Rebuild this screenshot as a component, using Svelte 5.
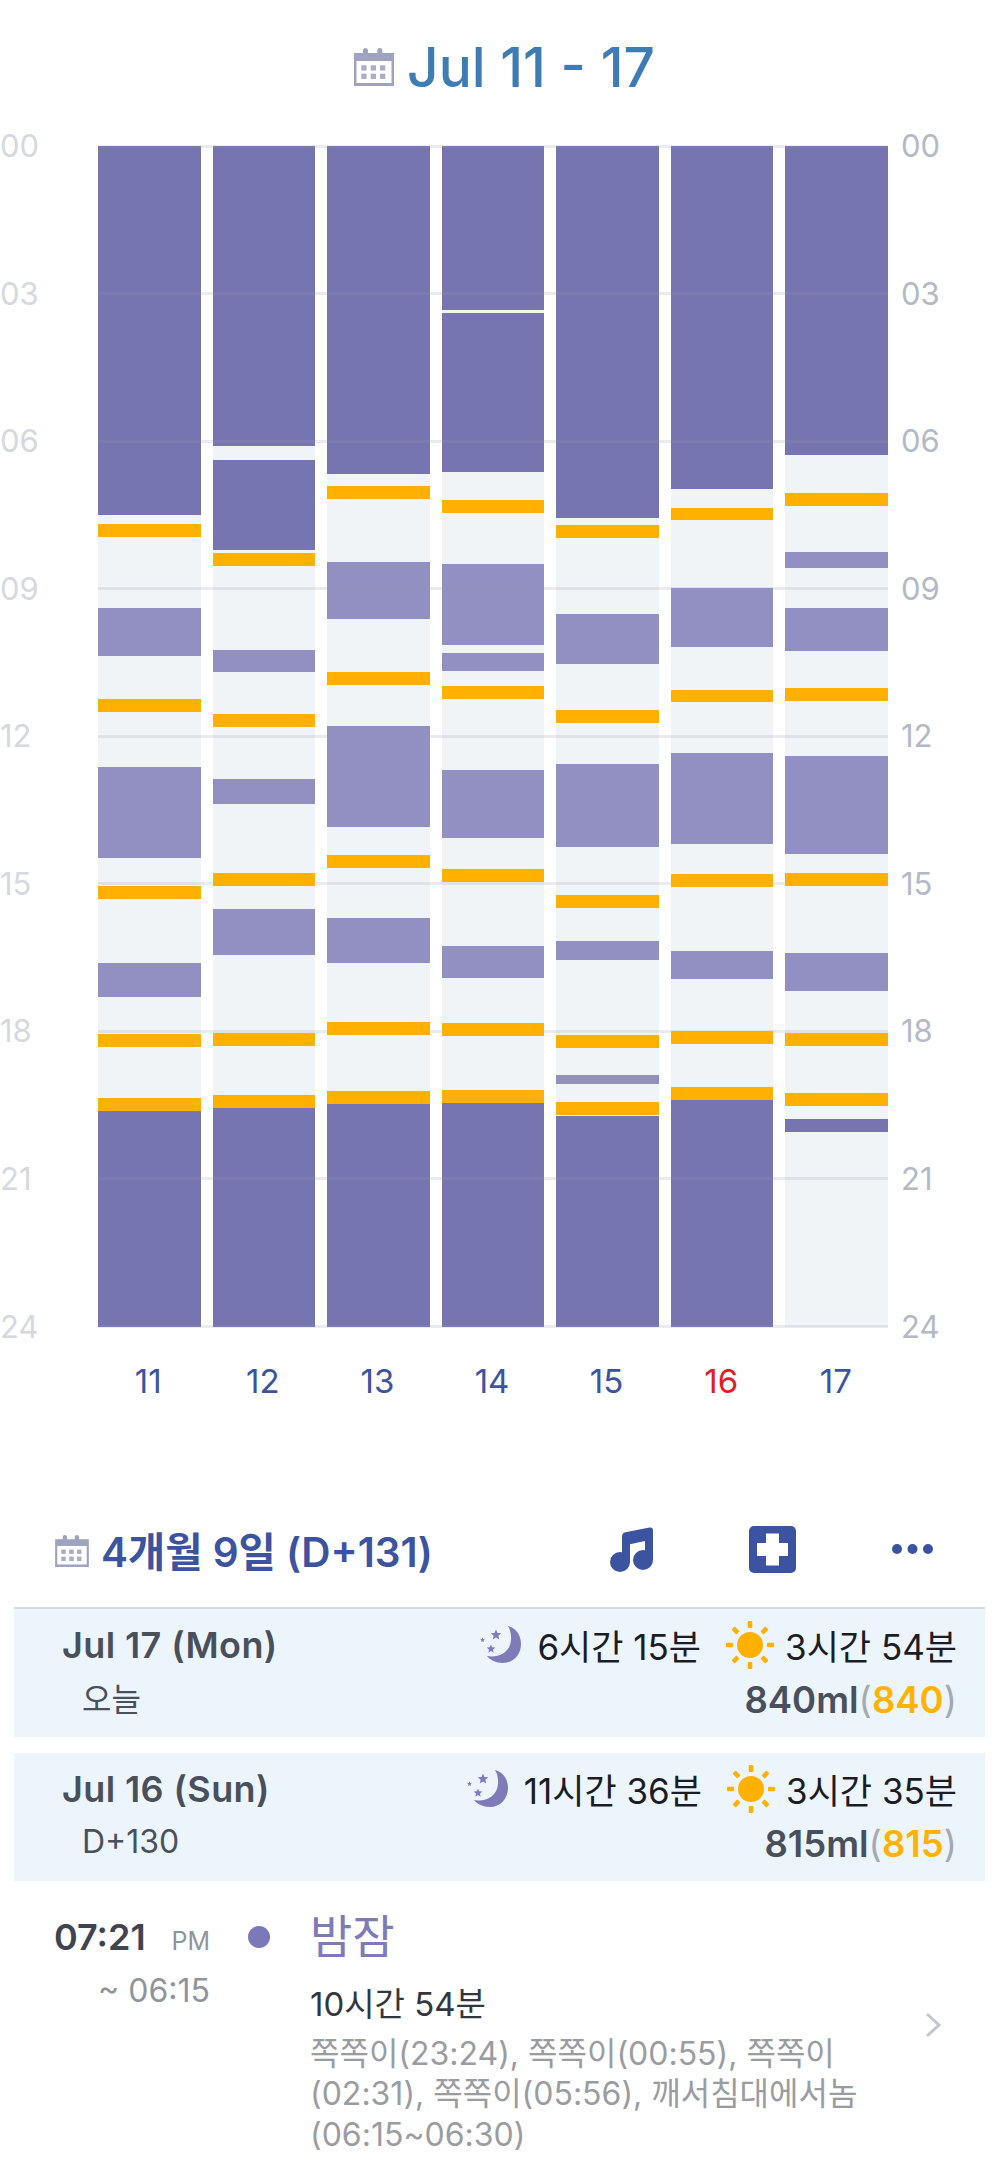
<script lang="ts">
  // segment edges are chart pixels measured from 00:00, kind: d = night, l = nap, o = feed
  const TOP = 146.5;
  const days = [
    { label: "11", segs: [["d",146,515],["o",524,537],["l",608,656],["o",699,712],["l",767,858],["o",886,899],["l",963,997],["o",1034,1047],["o",1098,1111],["d",1111,1327]] },
    { label: "12", segs: [["d",146,446],["d",460,550],["o",553,566],["l",650,672],["o",714,727],["l",779,804],["o",873,886],["l",909,955],["o",1033,1046],["o",1095,1108],["d",1108,1327]] },
    { label: "13", segs: [["d",146,474],["o",486,499],["l",562,619],["o",672,685],["l",726,827],["o",855,868],["l",918,963],["o",1022,1035],["o",1091,1104],["d",1104,1327]] },
    { label: "14", segs: [["d",146,310],["d",313,472],["o",500,513],["l",564,645],["l",653,671],["o",686,699],["l",770,838],["o",869,882],["l",946,978],["o",1023,1036],["o",1090,1103],["d",1103,1327]] },
    { label: "15", segs: [["d",146,518],["o",525,538],["l",614,664],["o",710,723],["l",764,847],["o",895,908],["l",941,960],["o",1035,1048],["l",1075,1084],["o",1102,1115],["d",1116,1327]] },
    { label: "16", red: true, segs: [["d",146,489],["o",508,520],["l",588,647],["o",690,702],["l",753,844],["o",874,887],["l",951,979],["o",1031,1044],["o",1087,1100],["d",1100,1327]] },
    { label: "17", segs: [["d",146,455],["o",493,506],["l",552,568],["l",608,651],["o",688,701],["l",756,854],["o",873,886],["l",953,991],["o",1033,1046],["o",1093,1106],["d",1119,1132]] }
  ];
  const hours = ["00","03","06","09","12","15","18","21","24"];

  const summaries = [
    { date: "Jul 17 (Mon)", sub: "오늘", night: "6시간 15분", nap: "3시간 54분", ml: "840ml", feeds: "840" },
    { date: "Jul 16 (Sun)", sub: "D+130", night: "11시간 36분", nap: "3시간 35분", ml: "815ml", feeds: "815" }
  ];

  function star(cx: number, cy: number, r: number) {
    const pts = [];
    for (let i = 0; i < 10; i++) {
      const a = -Math.PI / 2 + (i * Math.PI) / 5;
      const rad = i % 2 ? r * 0.45 : r;
      pts.push((cx + rad * Math.cos(a)).toFixed(2) + "," + (cy + rad * Math.sin(a)).toFixed(2));
    }
    return pts.join(" ");
  }
  const rays = [0, 45, 90, 135, 180, 225, 270, 315];
</script>

{#snippet calendar(cls)}
  <svg class={cls} viewBox="0 0 40 38">
    <path d="M9 5V2.5a2.5 2.5 0 0 1 5 0V5h9.300V2.500a2.500 2.500 0 0 1 5 0V5H40V38H0V5Z" fill="#9fa3bf" />
    <rect x="2.500" y="13" width="35" height="22" fill="#fff" />
    {#each [7.300, 16.700, 26] as x}
      {#each [17.300, 25.700] as y}
        <rect {x} {y} width="5.300" height="5.200" fill="#a9adc6" />
      {/each}
    {/each}
  </svg>
{/snippet}

<div class="page">
  <header class="title">
    {@render calendar("cal-big")}
    <span>Jul 11 - 17</span>
  </header>

  <section class="chart-row">
    <div class="hours left">
      {#each hours as h}<span>{h}</span>{/each}
    </div>
    <div class="chart">
      <div class="grid">
        {#each hours as h}<i></i>{/each}
      </div>
      {#each days as day}
        <div class="col">
          {#each day.segs as s}
            <div
              class="seg {s[0]}"
              style:top="{s[1] - TOP}px"
              style:height="{s[2] - s[1]}px"
            ></div>
          {/each}
        </div>
      {/each}
    </div>
    <div class="hours right">
      {#each hours as h}<span>{h}</span>{/each}
    </div>
  </section>

  <div class="days">
    {#each days as day}
      <span class:red={day.red}>{day.label}</span>
    {/each}
  </div>

  <div class="toolbar">
    {@render calendar("cal-small")}
    <span class="age">4개월 9일 (D+131)</span>
    <div class="tools">
      <svg class="music" viewBox="0 0 43 45">
        <circle cx="10" cy="35" r="10" />
        <circle cx="33" cy="33" r="10" />
        <path d="M12 35V9.500Q12 6 15.500 5.300L39.500 .5Q43 0 43 3.500V33H35V14L20 17.200V35Z" />
      </svg>
      <svg class="plus" viewBox="0 0 47 47">
        <rect width="47" height="47" rx="5" fill="#3c539f" />
        <path d="M17 7.500H30V17H39V30H30V39.500H17V30H8V17H17Z" fill="#fff" />
      </svg>
      <svg class="more" viewBox="0 0 41 10">
        <circle cx="5" cy="5" r="5" />
        <circle cx="20.500" cy="5" r="5" />
        <circle cx="36" cy="5" r="5" />
      </svg>
    </div>
  </div>

  {#each summaries as item}
    <div class="summary">
      <div class="line">
        <span class="date">{item.date}</span>
        <div class="stats">
          <svg class="moon" viewBox="0 0 42 38">
            <path d="M28 0C38 3 41 11 41 18C41 29 33 37 23 37C16 37 10 34 7 30C18 32 30 27 31 14C31.500 8 30 3 28 0Z" fill="#7e7bb8" />
            <polygon points={star(16, 9, 5.500)} fill="#7e7bb8" />
            <polygon points={star(11, 23, 4.500)} fill="#7e7bb8" />
            <polygon points={star(2.500, 14, 2.500)} fill="#7e7bb8" />
          </svg>
          <span class="dur night">{item.night}</span>
          <svg class="sun" viewBox="0 0 48 48">
            <circle cx="24" cy="24" r="13" fill="#ffb000" />
            {#each rays as r}
              <rect x="21.700" y="0" width="4.600" height="7" rx="1" fill="#ffb000" transform="rotate({r} 24 24)" />
            {/each}
          </svg>
          <span class="dur">{item.nap}</span>
        </div>
      </div>
      <div class="line second">
        <span class="sub">{item.sub}</span>
        <span class="ml">{item.ml}<em>(<b>{item.feeds}</b>)</em></span>
      </div>
    </div>
  {/each}

  <div class="entry">
    <div class="times">
      <div class="start"><strong>07:21</strong><small>PM</small></div>
      <div class="end">~ 06:15</div>
    </div>
    <div class="dot"></div>
    <div class="body">
      <div class="name">밤잠</div>
      <div class="length">10시간 54분</div>
      <p>쪽쪽이(23:24), 쪽쪽이(00:55), 쪽쪽이(02:31), 쪽쪽이(05:56), 깨서침대에서놈(06:15~06:30)</p>
    </div>
    <svg class="chevron" viewBox="0 0 16 26">
      <path d="M2 2L14 13L2 24" fill="none" stroke="#c4c7cd" stroke-width="3" />
    </svg>
  </div>
</div>

<style>
  :global(body) {
    margin: 0;
    background: #fff;
  }
  .page {
    width: 999px;
    height: 2163px;
    overflow: hidden;
    font-family: Inter, "Noto Sans CJK KR", sans-serif;
    color: #4a4f5c;
  }

  .title {
    height: 146px;
    display: flex;
    align-items: flex-start;
    justify-content: center;
    gap: 13px;
    padding-left: 10px;
    box-sizing: border-box;
  }
  .title span {
    font-size: 55px;
    font-weight: 500;
    line-height: 62px;
    margin-top: 36px;
    color: #3e7cb5;
  }
  .cal-big {
    width: 40px;
    height: 38px;
    margin-top: 48px;
  }

  .chart-row {
    display: flex;
    height: 1180.500px;
  }
  .hours {
    display: flex;
    flex-direction: column;
    justify-content: space-between;
    font-size: 31px;
  }
  .hours span {
    height: 0;
    line-height: 0;
  }
  .hours.left {
    width: 98px;
    color: #d5d8df;
    box-sizing: border-box;
  }
  .hours.right {
    padding-left: 13px;
    color: #b3b9c7;
  }
  .chart {
    position: relative;
    width: 790px;
    display: flex;
    gap: 12px;
  }
  .grid {
    position: absolute;
    inset: 0;
    z-index: 1;
    display: flex;
    flex-direction: column;
    justify-content: space-between;
    pointer-events: none;
  }
  .grid i {
    display: block;
    height: 3px;
    margin: -1.500px 0;
    background: rgba(150, 155, 170, 0.2);
  }
  .col {
    position: relative;
    flex: 1;
    background: #f0f4f7;
  }
  .seg {
    position: absolute;
    left: 0;
    right: 0;
  }
  .seg.d {
    background: #7674b1;
  }
  .seg.l {
    background: #928fc3;
  }
  .seg.o {
    background: #ffb000;
    z-index: 2;
  }

  .days {
    display: flex;
    gap: 12px;
    box-sizing: border-box;
    padding: 35px 0 0 97px;
    width: 887px;
    height: 141px;
    font-size: 33px;
    line-height: 38px;
    color: #3c539f;
  }
  .days span {
    flex: 1;
    text-align: center;
  }
  .days .red {
    color: #e41d1d;
  }

  .toolbar {
    display: flex;
    align-items: center;
    box-sizing: border-box;
    height: 141px;
    margin: 0 14px;
    padding: 24px 0 0 41px;
    border-bottom: 2px solid #d4dade;
  }
  .cal-small {
    width: 34px;
    height: 32px;
    margin: 3px 12px 0 0;
  }
  .age {
    font-size: 40.500px;
    font-weight: 600;
    color: #3c539f;
    margin-top: 0;
  }
  .tools {
    margin-left: auto;
    display: flex;
    align-items: center;
    margin-right: 52px;
  }
  .tools svg {
    fill: #3c539f;
  }
  .music {
    width: 43px;
    height: 45px;
  }
  .plus {
    width: 47px;
    height: 47px;
    margin-left: 96px;
  }
  .more {
    width: 41px;
    height: 10px;
    margin-left: 96px;
  }

  .summary {
    margin: 0 14px 16px;
    height: 128px;
    background: #ecf5fc;
    padding: 16px 28px 0 48px;
    box-sizing: border-box;
  }
  .line {
    display: flex;
    align-items: center;
    justify-content: space-between;
    height: 40px;
  }
  .line.second {
    margin-top: 15px;
  }
  .date {
    font-size: 36px;
    font-weight: 600;
    letter-spacing: 0.4px;
  }
  .stats {
    display: flex;
    align-items: center;
    color: #1c1c24;
  }
  .moon {
    width: 42px;
    height: 38px;
    margin-right: 15px;
  }
  .sun {
    width: 48px;
    height: 48px;
    margin: 0 11px 0 25px;
  }
  .dur {
    font-size: 35px;
  }
  .sub {
    font-size: 32px;
    margin: 0 0 5px 20px;
  }
  .ml {
    font-size: 36.500px;
    font-weight: 600;
  }
  .ml em {
    font-style: normal;
    color: #a5a9b0;
    font-weight: 400;
  }
  .ml b {
    color: #ffb300;
    font-weight: 600;
  }

  .entry {
    display: flex;
    align-items: flex-start;
    padding-top: 8px;
  }
  .times {
    width: 156px;
    margin: 7px 0 0 54px;
  }
  .start {
    display: flex;
    align-items: baseline;
    height: 50px;
    line-height: 50px;
  }
  .start strong {
    font-size: 36px;
    font-weight: 600;
    color: #3f4450;
  }
  .start small {
    font-size: 25px;
    margin-left: auto;
    color: #8f939c;
  }
  .end {
    text-align: right;
    font-size: 32px;
    line-height: 40px;
    color: #8f939c;
    margin-top: 9px;
  }
  .dot {
    width: 22px;
    height: 22px;
    border-radius: 50%;
    background: #7c79b8;
    margin: 21px 0 0 38px;
  }
  .body {
    width: 590px;
    margin-left: 40px;
  }
  .name {
    font-size: 46px;
    line-height: 62px;
    color: #7e7bb8;
  }
  .length {
    font-size: 33px;
    line-height: 40px;
    font-weight: 400;
    color: #33363f;
    margin-top: 17px;
  }
  .body p {
    margin: 10px 0 0;
    font-size: 32px;
    line-height: 40.500px;
    color: #9a9ca2;
  }
  .chevron {
    width: 16px;
    height: 26px;
    margin: 107px 0 0 25px;
  }
</style>
